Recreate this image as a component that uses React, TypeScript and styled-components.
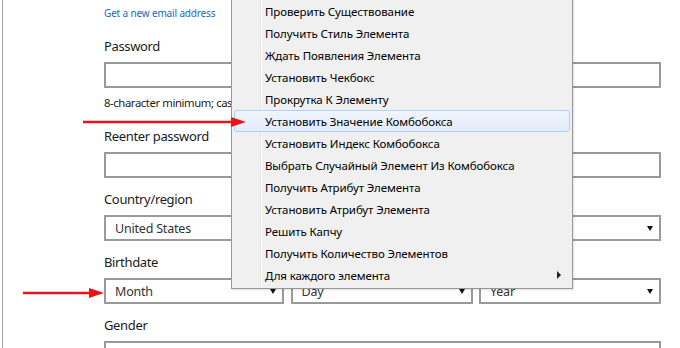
import styled, { createGlobalStyle } from 'styled-components'

const GlobalStyle = createGlobalStyle`
  html, body {
    margin: 0;
    padding: 0;
    background: #fff;
    overflow: hidden;
  }
  body {
    font-family: 'Noto Sans', 'Open Sans', sans-serif;
    color: #1b1b1b;
  }
`

const Page = styled.div`
  position: relative;
  width: 680px;
  height: 348px;
  overflow: hidden;
`

const Frame = styled.div`
  margin-left: 2px;
  border-left: 1px solid #a0a0a0;
  height: 100%;
  padding-left: 101px;
  padding-top: 5px;
  box-sizing: border-box;
`

const Column = styled.div`
  width: 557px;
`

const NewEmailLink = styled.a`
  display: block;
  font-size: 10px;
  letter-spacing: -0.15px;
  line-height: 16px;
  color: #1769c4;
  text-decoration: none;
  margin-bottom: 15px;
`

const Field = styled.div<{ $gap?: number }>`
  margin-bottom: ${(p) => p.$gap ?? 11}px;
`

const Label = styled.div`
  font-size: 13px;
  letter-spacing: -0.35px;
  line-height: 20px;
  margin-bottom: 6px;
  color: #1b1b1b;
`

const TextBox = styled.div`
  height: 26px;
  border: 2px solid #999;
  box-sizing: border-box;
  background: #fff;
`

const Hint = styled.div`
  font-size: 11.3px;
  letter-spacing: -0.4px;
  line-height: 18px;
  margin-top: 6px;
  margin-bottom: 14px;
  white-space: nowrap;
`

const SelectRow = styled.div`
  display: grid;
  grid-template-columns: 180px 182px 182px;
  gap: 6px;
  justify-content: space-between;
`

const Select = styled.div`
  height: 26px;
  border: 2px solid #999;
  box-sizing: border-box;
  background: #fff;
  display: flex;
  align-items: center;
  justify-content: space-between;
  padding: 0 6px 0 9px;
  font-size: 12.5px;
  letter-spacing: -0.2px;
  color: #333;
`

const Caret = styled.span`
  width: 0;
  height: 0;
  border-left: 3px solid transparent;
  border-right: 3px solid transparent;
  border-top: 5px solid #111;
`

const Menu = styled.div`
  position: absolute;
  left: 231px;
  top: -3px;
  width: 342px;
  box-sizing: border-box;
  border: 1px solid #979797;
  background: #f0f0f0;
  padding: 2px 2px 2px;
  box-shadow: 1px 1px 2px rgba(0, 0, 0, 0.12);
`

const Gutter = styled.div`
  position: absolute;
  left: 28px;
  top: 0;
  bottom: 0;
  border-left: 1px solid #e2e3e3;
  border-right: 1px solid #fff;
`

const MenuItem = styled.div<{ $active?: boolean }>`
  position: relative;
  height: 22px;
  box-sizing: border-box;
  display: flex;
  align-items: center;
  justify-content: space-between;
  padding: 0 8px 0 30px;
  font-size: 11.5px;
  letter-spacing: -0.1px;
  color: #000;
  border: 1px solid ${(p) => (p.$active ? '#aecff7' : 'transparent')};
  border-radius: 3px;
  background: ${(p) => (p.$active ? 'linear-gradient(#f0f5fd, #e3ecf9)' : 'transparent')};
  white-space: nowrap;
`

const SubArrow = styled.span`
  width: 0;
  height: 0;
  border-top: 4px solid transparent;
  border-bottom: 4px solid transparent;
  border-left: 4px solid #222;
`

const Annotation = styled.svg`
  position: absolute;
  left: 0;
  top: 0;
  pointer-events: none;
`

const items = [
  'Проверить Существование',
  'Получить Стиль Элемента',
  'Ждать Появления Элемента',
  'Установить Чекбокс',
  'Прокрутка К Элементу',
  'Установить Значение Комбобокса',
  'Установить Индекс Комбобокса',
  'Выбрать Случайный Элемент Из Комбобокса',
  'Получить Атрибут Элемента',
  'Установить Атрибут Элемента',
  'Решить Капчу',
  'Получить Количество Элементов',
  'Для каждого элемента',
]

export default function App() {
  return (
    <>
      <GlobalStyle />
      <Page>
        <Frame>
          <Column>
            <NewEmailLink href="#">Get a new email address</NewEmailLink>
            <Field $gap={0}>
              <Label>Password</Label>
              <TextBox />
              <Hint>8-character minimum; case sensitive</Hint>
            </Field>
            <Field>
              <Label>Reenter password</Label>
              <TextBox />
            </Field>
            <Field>
              <Label>Country/region</Label>
              <Select>
                United States
                <Caret />
              </Select>
            </Field>
            <Field>
              <Label>Birthdate</Label>
              <SelectRow>
                <Select>
                  Month
                  <Caret />
                </Select>
                <Select>
                  Day
                  <Caret />
                </Select>
                <Select>
                  Year
                  <Caret />
                </Select>
              </SelectRow>
            </Field>
            <Field>
              <Label>Gender</Label>
              <TextBox />
            </Field>
          </Column>
        </Frame>

        <Menu>
          <Gutter />
          {items.map((label, i) => (
            <MenuItem key={label} $active={i === 5}>
              {label}
              {i === items.length - 1 && <SubArrow />}
            </MenuItem>
          ))}
        </Menu>

        <Annotation width="680" height="348">
          <line x1="83" y1="122" x2="233" y2="122" stroke="#e8141a" strokeWidth="2.5" />
          <polygon points="231,117 246,122 231,127" fill="#e8141a" />
          <line x1="23" y1="293" x2="91" y2="293" stroke="#e8141a" strokeWidth="2.5" />
          <polygon points="89,288 104,293 89,298" fill="#e8141a" />
        </Annotation>
      </Page>
    </>
  )
}
